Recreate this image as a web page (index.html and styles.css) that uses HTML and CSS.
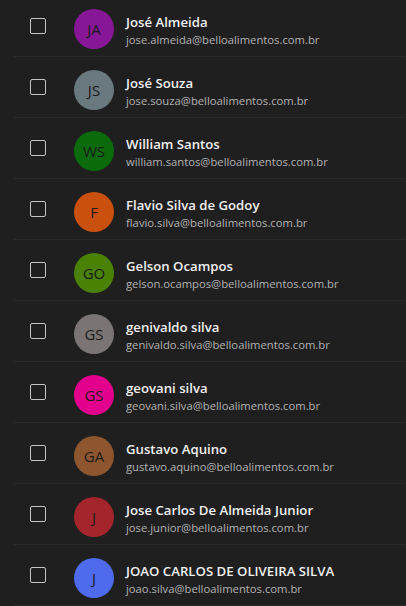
FILE: index.html
```html
<!DOCTYPE html>
<html lang="pt-BR">
<head>
<meta charset="utf-8">
<title>Pessoas</title>
<link rel="stylesheet" href="styles.css">
</head>
<body>
<ul class="list">
  <li class="row"><span class="check"></span><span class="avatar c-purple">JA</span><div class="info"><div class="name">José Almeida</div><div class="email">jose.almeida@belloalimentos.com.br</div></div></li>
  <li class="row"><span class="check"></span><span class="avatar c-slate">JS</span><div class="info"><div class="name">José Souza</div><div class="email">jose.souza@belloalimentos.com.br</div></div></li>
  <li class="row"><span class="check"></span><span class="avatar c-green">WS</span><div class="info"><div class="name">William Santos</div><div class="email">william.santos@belloalimentos.com.br</div></div></li>
  <li class="row"><span class="check"></span><span class="avatar c-orange">F</span><div class="info"><div class="name">Flavio Silva de Godoy</div><div class="email">flavio.silva@belloalimentos.com.br</div></div></li>
  <li class="row"><span class="check"></span><span class="avatar c-lime">GO</span><div class="info"><div class="name">Gelson Ocampos</div><div class="email">gelson.ocampos@belloalimentos.com.br</div></div></li>
  <li class="row"><span class="check"></span><span class="avatar c-gray">GS</span><div class="info"><div class="name">genivaldo silva</div><div class="email">genivaldo.silva@belloalimentos.com.br</div></div></li>
  <li class="row"><span class="check"></span><span class="avatar c-pink">GS</span><div class="info"><div class="name">geovani silva</div><div class="email">geovani.silva@belloalimentos.com.br</div></div></li>
  <li class="row"><span class="check"></span><span class="avatar c-brown">GA</span><div class="info"><div class="name">Gustavo Aquino</div><div class="email">gustavo.aquino@belloalimentos.com.br</div></div></li>
  <li class="row"><span class="check"></span><span class="avatar c-red">J</span><div class="info"><div class="name">Jose Carlos De Almeida Junior</div><div class="email">jose.junior@belloalimentos.com.br</div></div></li>
  <li class="row"><span class="check"></span><span class="avatar c-blue">J</span><div class="info"><div class="name">JOAO CARLOS DE OLIVEIRA SILVA</div><div class="email">joao.silva@belloalimentos.com.br</div></div></li>
</ul>
</body>
</html>
```
FILE: styles.css
```css
html, body {
  margin: 0;
  padding: 0;
  background: #1f1f1f;
  overflow: hidden;
}
body {
  font-family: "Open Sans", "Noto Sans", sans-serif;
  color: #ffffff;
}
.list {
  list-style: none;
  margin: -4px 0 0 0;
  padding: 0;
}
.row {
  height: 60px;
  border-bottom: 1px solid #292929;
  margin-left: 14px;
  display: flex;
  align-items: flex-start;
}
.check {
  flex: none;
  width: 14px;
  height: 14px;
  border: 1px solid #c4c4c4;
  border-radius: 2px;
  margin: 22px 0 0 16px;
}
.avatar {
  flex: none;
  width: 40px;
  height: 40px;
  border-radius: 50%;
  margin: 13px 12px 0 28px;
  display: flex;
  align-items: center;
  justify-content: center;
  font-size: 15px;
  color: #1a1a1a;
}
.info {
  padding-top: 17px;
  min-width: 0;
}
.name {
  font-size: 13.2px;
  font-weight: 600;
  line-height: 18px;
  color: #f0f0f0;
  white-space: nowrap;
}
.email {
  font-size: 11.25px;
  line-height: 17px;
  color: #b3b3b3;
  white-space: nowrap;
}
.c-purple { background: #881798; }
.c-slate { background: #69797e; }
.c-green { background: #0b6a0b; }
.c-orange { background: #ca5010; }
.c-lime { background: #498205; }
.c-gray { background: #7a7574; }
.c-pink { background: #e3008c; }
.c-brown { background: #8e562e; }
.c-red { background: #a4262c; }
.c-blue { background: #4f6bed; }
```
